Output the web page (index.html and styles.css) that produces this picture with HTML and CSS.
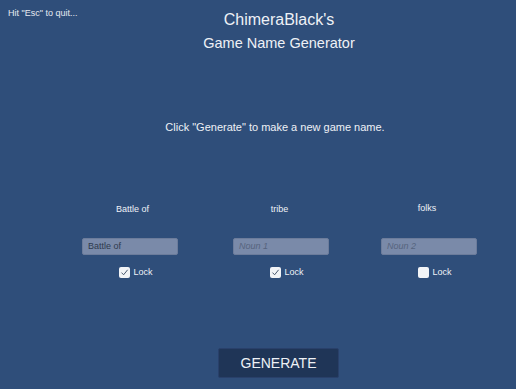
FILE: index.html
```html
<!DOCTYPE html>
<html>
<head>
<meta charset="utf-8">
<link rel="stylesheet" href="styles.css">
</head>
<body>
<div class="screen">
  <div class="quit">Hit "Esc" to quit...</div>
  <header class="title">
    <div class="title-1">ChimeraBlack's</div>
    <div class="title-2">Game Name Generator</div>
  </header>
  <p class="prompt">Click "Generate" to make a new game name.</p>
  <div class="columns">
    <div class="col">
      <div class="word w1">Battle of</div>
      <div class="field">Battle of</div>
      <label class="lock"><span class="box checked"><svg viewBox="0 0 11 11" width="11" height="11"><path d="M2.5 5.6 L4.6 7.8 L8.6 2.8" fill="none" stroke="#4a5a70" stroke-width="1"/></svg></span>Lock</label>
    </div>
    <div class="col">
      <div class="word w2">tribe</div>
      <div class="field placeholder">Noun 1</div>
      <label class="lock"><span class="box checked"><svg viewBox="0 0 11 11" width="11" height="11"><path d="M2.5 5.6 L4.6 7.8 L8.6 2.8" fill="none" stroke="#4a5a70" stroke-width="1"/></svg></span>Lock</label>
    </div>
    <div class="col">
      <div class="word w3">folks</div>
      <div class="field placeholder">Noun 2</div>
      <label class="lock"><span class="box"></span>Lock</label>
    </div>
  </div>
  <div class="actions">
    <button class="generate">GENERATE</button>
  </div>
</div>
</body>
</html>
```
FILE: styles.css
```css
html, body {
  margin: 0;
  padding: 0;
  background: #2f4e7a;
}
.screen {
  position: relative;
  width: 516px;
  height: 389px;
  overflow: hidden;
  font-family: "Liberation Sans", Arial, sans-serif;
  color: #eef1f6;
  display: flex;
  flex-direction: column;
}
.quit {
  position: absolute;
  left: 8px;
  top: 8px;
  font-size: 9px;
  color: #e6eaf1;
}
.title {
  text-align: center;
  padding-top: 10px;
  padding-left: 42px;
}
.title-1 {
  font-size: 16px;
  line-height: 19px;
}
.title-2 {
  font-size: 14.5px;
  line-height: 18px;
  margin-top: 5px;
}
.prompt {
  margin: 69px 0 0 34px;
  text-align: center;
  font-size: 11px;
  line-height: 13px;
}
.columns {
  display: grid;
  grid-template-columns: 151px 148px 96px;
  padding-left: 82px;
  margin-top: 70px;
}
.col {
  width: 96px;
  display: flex;
  flex-direction: column;
  align-items: center;
}
.word {
  font-size: 9px;
  line-height: 11px;
}
.w1 { margin-left: 5px; }
.w2 { margin-left: -3px; }
.w3 {
  margin-left: -4px;
  margin-top: -1px;
  margin-bottom: 1px;
}
.field {
  margin-top: 23px;
  box-sizing: border-box;
  width: 96px;
  height: 17px;
  background: #7a8aa9;
  border: 1px solid #6c7c9b;
  border-radius: 2px;
  font-size: 9px;
  line-height: 15px;
  padding-left: 5px;
  color: #2e3a4e;
}
.placeholder {
  font-style: italic;
  color: #56647e;
}
.lock {
  display: flex;
  align-items: center;
  gap: 3px;
  margin-top: 12px;
  margin-left: 12px;
  font-size: 9px;
  line-height: 11px;
  color: #eef1f6;
}
.box {
  width: 11px;
  height: 11px;
  background: #f2f4f7;
  border-radius: 2px;
  display: block;
}
.box svg {
  display: block;
}
.actions {
  display: flex;
  justify-content: center;
  margin-top: 70px;
  padding-left: 41px;
}
.generate {
  width: 121px;
  height: 30px;
  background: #1f3557;
  border: 1px solid #29406a;
  border-radius: 2px;
  color: #eef1f6;
  font-family: "Liberation Sans", Arial, sans-serif;
  font-size: 14px;
  padding: 0;
}
```
